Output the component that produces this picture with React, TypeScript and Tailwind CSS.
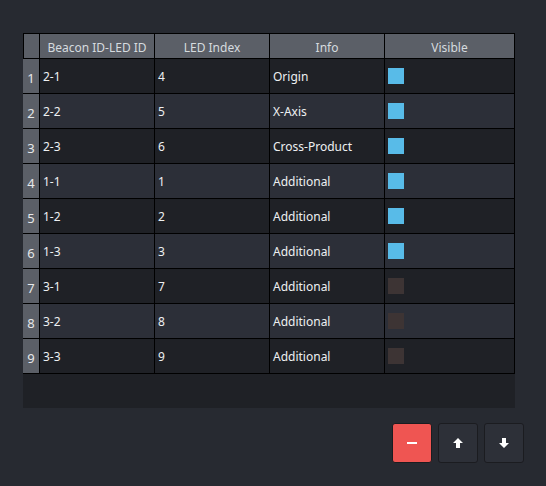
import React from "react";

const rows = [
  { id: "2-1", led: "4", info: "Origin", visible: true },
  { id: "2-2", led: "5", info: "X-Axis", visible: true },
  { id: "2-3", led: "6", info: "Cross-Product", visible: true },
  { id: "1-1", led: "1", info: "Additional", visible: true },
  { id: "1-2", led: "2", info: "Additional", visible: true },
  { id: "1-3", led: "3", info: "Additional", visible: true },
  { id: "3-1", led: "7", info: "Additional", visible: false },
  { id: "3-2", led: "8", info: "Additional", visible: false },
  { id: "3-3", led: "9", info: "Additional", visible: false },
];

const cols = "grid grid-cols-[16px_114px_114px_114px_129px] gap-x-px";

export default function App() {
  return (
    <div
      className="w-[546px] h-[486px] bg-[#272a31] pt-[33px] pl-[23px] text-[12px] text-[#eef0f2]"
      style={{ fontFamily: '"Noto Sans", "Open Sans", Arial, sans-serif' }}
    >
      {/* table */}
      <div className="w-[492px] h-[375px] bg-[#1f2126]">
        <div className="bg-black flex flex-col gap-y-px py-px">
          {/* header */}
          <div className={cols + " h-[24px]"}>
            <div className="bg-[#5b5f67] border-l border-black" />
            {["Beacon ID-LED ID", "LED Index", "Info", "Visible"].map((h) => (
              <div key={h} className="bg-[#5b5f67] flex items-center justify-center pt-[3px] text-[#d6dbdf]">
                {h}
              </div>
            ))}
          </div>
          {rows.map((r, i) => {
            const bg = i % 2 === 0 ? "bg-[#1f2126]" : "bg-[#2c2f38]";
            return (
              <div key={r.id} className={cols + " h-[34px]"}>
                <div className="bg-[#5b5f67] flex items-center justify-center pt-[5px] text-[13px] text-[#e6e8ea]">
                  {i + 1}
                </div>
                <div className={bg + " flex items-center pl-[3px] pt-[2px]"}>{r.id}</div>
                <div className={bg + " flex items-center pl-[3px] pt-[2px]"}>{r.led}</div>
                <div className={bg + " flex items-center pl-[3px] pt-[2px]"}>{r.info}</div>
                <div className={bg + " flex items-center pl-[3px]"}>
                  <span
                    className={
                      "block w-[16px] h-[16px] " + (r.visible ? "bg-[#58bbe8]" : "bg-[#3d3434]")
                    }
                  />
                </div>
              </div>
            );
          })}
        </div>
      </div>

      {/* buttons */}
      <div className="flex gap-[6px] ml-[369px] mt-[15px]">
        <button className="w-[40px] h-[40px] rounded-[3px] border border-[#1b1c20] bg-[#ef5552] flex items-center justify-center">
          <span className="block w-[10px] h-[2px] bg-white" />
        </button>
        <button className="w-[40px] h-[40px] rounded-[3px] border border-[#1b1c20] bg-[#2d3038] flex items-center justify-center">
          <svg width="10" height="10" viewBox="0 0 10 10">
            <polygon points="5,0 10,5 7,5 7,10 3,10 3,5 0,5" fill="white" />
          </svg>
        </button>
        <button className="w-[40px] h-[40px] rounded-[3px] border border-[#1b1c20] bg-[#2d3038] flex items-center justify-center">
          <svg width="10" height="10" viewBox="0 0 10 10">
            <polygon points="3,0 7,0 7,5 10,5 5,10 0,5 3,5" fill="white" />
          </svg>
        </button>
      </div>
    </div>
  );
}
